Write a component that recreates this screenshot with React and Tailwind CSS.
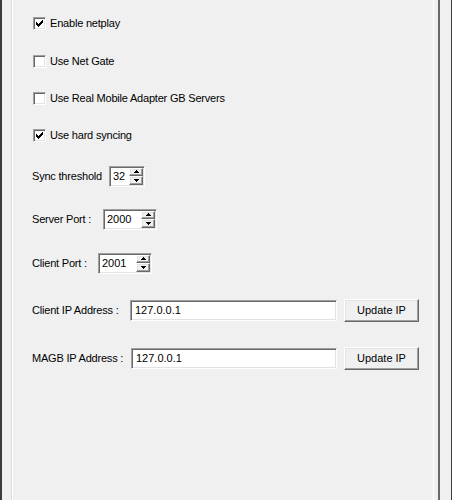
import React from 'react';

const sunken = 'border border-t-[#a0a0a0] border-l-[#a0a0a0] border-b-white border-r-white shadow-[inset_1px_1px_0_#696969,inset_-1px_-1px_0_#e3e3e3]';
const raised = 'border border-t-white border-l-white border-b-[#696969] border-r-[#696969] shadow-[inset_-1px_-1px_0_#a0a0a0,inset_1px_1px_0_#e3e3e3]';

// classic 7x7 tick, one rect per run
const tick = [
    [6, 0, 1], [5, 1, 2], [0, 2, 1], [4, 2, 3], [0, 3, 2], [3, 3, 3],
    [0, 4, 5], [1, 5, 3], [2, 6, 1],
];

const Check = ({ checked, label }) => (
    <div className="flex items-center h-[24px]">
        <div className={`w-[13px] h-[13px] bg-white ${sunken} flex items-center justify-center`}>
            {checked && (
                <svg width="7" height="7" viewBox="0 0 7 7" shapeRendering="crispEdges">
                    {tick.map(([x, y, w]) => <rect key={`${x}-${y}`} x={x} y={y} width={w} height="1" fill="#000" />)}
                </svg>
            )}
        </div>
        <span className="ml-[4px] tracking-[-0.2px]">{label}</span>
    </div>
);

const Arrow = ({ up }) => (
    <div className={`flex-1 bg-[#f0f0f0] ${raised} flex items-center justify-center`}>
        <svg width="5" height="3" viewBox="0 0 5 3" shapeRendering="crispEdges">
            {up
                ? <path d="M2 0h1v1h1v1h1v1h-5v-1h1v-1h1z" fill="#000" />
                : <path d="M0 0h5v1h-1v1h-1v1h-1v-1h-1v-1h-1z" fill="#000" />}
        </svg>
    </div>
);

const Spin = ({ value, width }) => (
    <div className={`flex h-[21px] bg-white ${sunken} ${width}`}>
        <span className="flex-1 pl-[3px] leading-[19px]">{value}</span>
        <div className="flex flex-col w-[15px] py-[1px] pr-[1px]">
            <Arrow up />
            <Arrow />
        </div>
    </div>
);

const IpRow = ({ label, labelW, inputW, value }) => (
    <div className="flex items-center h-[24px]">
        <span className={`${labelW} tracking-[-0.2px]`}>{label}</span>
        <div className={`${inputW} h-[21px] bg-white ${sunken} pl-[4px] leading-[19px]`}>{value}</div>
        <button className={`ml-[7px] w-[75px] h-[23px] bg-[#f0f0f0] ${raised} text-black`}>Update IP</button>
    </div>
);

export default function App() {
    return (
        <div className="w-[452px] h-[500px] bg-[#f0f0f0] flex text-[11px] text-black font-['Liberation_Sans',Arial,sans-serif] overflow-hidden">
            <div className="w-[2px] bg-[#3c3c3c]" />
            <div className="w-[9px]" />
            <div className="w-px bg-[#dcdcdc]" />
            <div className="w-px bg-white" />
            <div className="flex-1 flex flex-col pl-[20px]">
                <div className="mt-[11px]"><Check checked label="Enable netplay" /></div>
                <div className="mt-[14px]"><Check label="Use Net Gate" /></div>
                <div className="mt-[13px]"><Check label="Use Real Mobile Adapter GB Servers" /></div>
                <div className="mt-[13px]"><Check checked label="Use hard syncing" /></div>
                <div className="mt-[17px] flex items-center h-[24px] -ml-px">
                    <span className="w-[77px] tracking-[-0.2px]">Sync threshold</span>
                    <Spin value="32" width="w-[36px]" />
                </div>
                <div className="mt-[19px] flex items-center h-[24px] -ml-px">
                    <span className="w-[71px] tracking-[-0.2px]">Server Port :</span>
                    <Spin value="2000" width="w-[54px]" />
                </div>
                <div className="mt-[20px] flex items-center h-[24px] -ml-px">
                    <span className="w-[66px] tracking-[-0.2px]">Client Port :</span>
                    <Spin value="2001" width="w-[54px]" />
                </div>
                <div className="mt-[23px] -ml-px">
                    <IpRow label="Client IP Address :" labelW="w-[98px]" inputW="w-[207px]" value="127.0.0.1" />
                </div>
                <div className="mt-[24px] -ml-px">
                    <IpRow label="MAGB IP Address :" labelW="w-[99px]" inputW="w-[206px]" value="127.0.0.1" />
                </div>
            </div>
            <div className="w-px bg-white" />
            <div className="w-[4px]" />
            <div className="w-[2px] bg-[#696969]" />
            <div className="w-[11px]" />
            <div className="w-px bg-[#3c3c3c]" />
        </div>
    );
}
